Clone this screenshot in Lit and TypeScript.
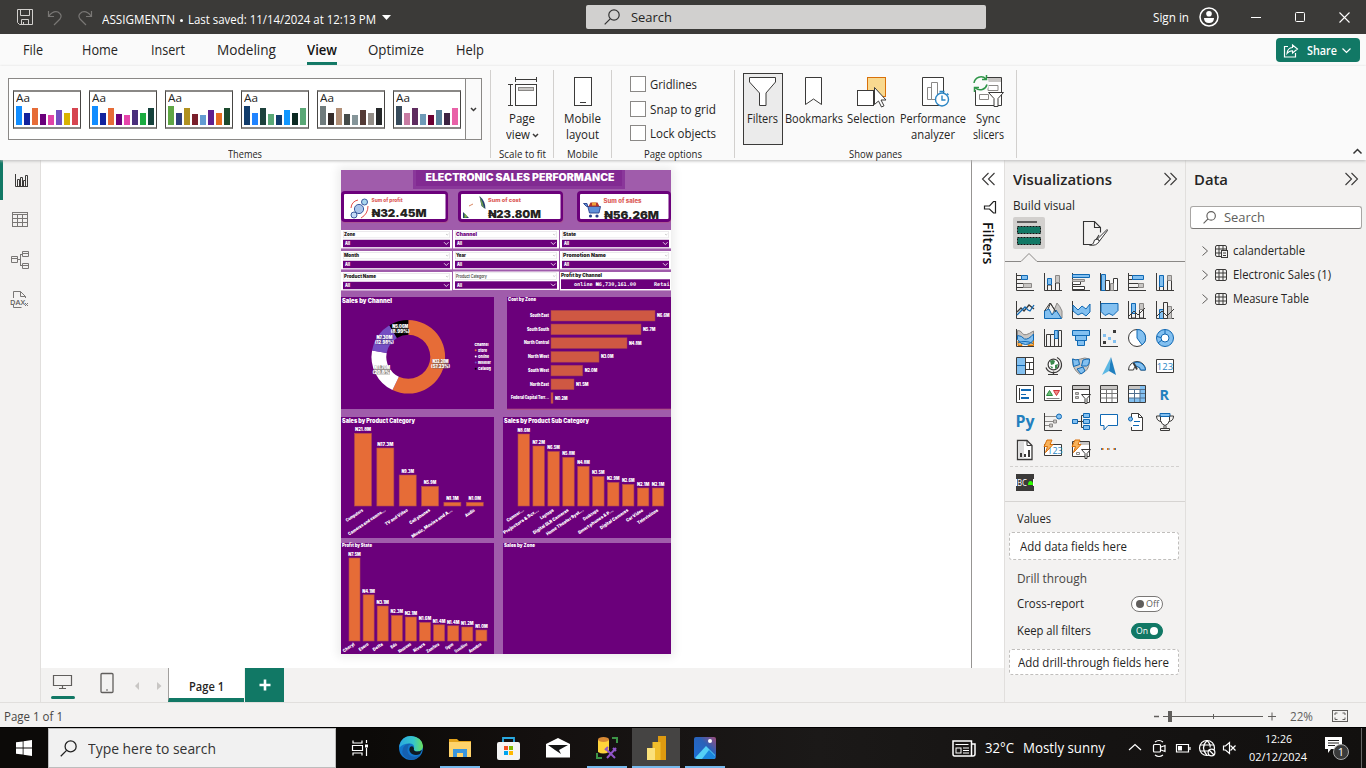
import { LitElement, html, svg, css } from "lit";
import { customElement, property } from "lit/decorators.js";

/** Single line of text that is condensed or stretched to a given width. */
@customElement("fit-text")
class FitText extends LitElement {
  @property({ type: Number }) w = 0;
  static styles = css`
    :host { display: inline-block; white-space: nowrap; text-align: left; flex: none; }
    span { display: inline-block; transform-origin: 0 50%; }
  `;
  render() { return html`<span><slot></slot></span>`; }
  updated() {
    const s = this.renderRoot.querySelector("span") as HTMLElement;
    s.style.transform = "none";
    const n = s.getBoundingClientRect().width;
    if (n && this.w) {
      this.style.width = this.w + "px";
      s.style.transform = `scaleX(${this.w / n})`;
    }
  }
}

const t = (s: string, w: number, cls = "") => html`<fit-text class=${cls} .w=${w}>${s}</fit-text>`;
const icon = (w: number, h: number, body: unknown, cls = "") =>
  html`<svg class="ic ${cls}" width=${w} height=${h} viewBox="0 0 ${w} ${h}" fill="none">${body}</svg>`;

/* ---------- report page ---------- */
@customElement("report-page")
class ReportPage extends LitElement {
  static styles = css`
    :host { display: block; width: 330px; height: 484px; box-shadow: 0 0 9px 3px #ececec; }
    svg { display: block; }
    text { font-family: Inter, "Open Sans", sans-serif; font-weight: 900; fill: #fff; }
    .dk { fill: #252423; }
    .pu { fill: #6b007b; }
    .rd { fill: #dc5b57; font-weight: 800; }
    .mono { font-family: "DejaVu Sans Mono", monospace; font-weight: 700; }
    .lt { font-weight: 600; fill: #444; }
  `;
  private tx(x: number, y: number, s: string, size: number, w = 0, cls = "", anchor = "start") {
    return w
      ? svg`<text x=${x} y=${y} font-size=${size} textLength=${w} lengthAdjust="spacingAndGlyphs" class=${cls} text-anchor=${anchor}>${s}</text>`
      : svg`<text x=${x} y=${y} font-size=${size} class=${cls} text-anchor=${anchor}>${s}</text>`;
  }
  private arc(a0: number, a1: number, fill: string) {
    const cx = 408.3, cy = 356.8, R = 36.8, r = 22;
    const p = (a: number, q: number) => {
      const k = ((a - 90) * Math.PI) / 180;
      return `${(cx + q * Math.cos(k)).toFixed(2)} ${(cy + q * Math.sin(k)).toFixed(2)}`;
    };
    const big = a1 - a0 > 180 ? 1 : 0;
    return svg`<path fill=${fill} d="M${p(a0, R)}A${R} ${R} 0 ${big} 1 ${p(a1, R)}L${p(a1, r)}A${r} ${r} 0 ${big} 0 ${p(a0, r)}Z"/>`;
  }
  private tag(x: number, y: number, a: string, b: string, fill: string) {
    return svg`<rect x=${x - 8} y=${y - 4.6} width="16" height="9.2" fill=${fill} opacity=".75"/>
      ${this.tx(x, y - 0.6, a, 4.3, 16, "", "middle")}${this.tx(x, y + 3.9, b, 4.3, 19, "", "middle")}`;
  }
  private card(x: number, x2: number) {
    return svg`<rect x=${x + 0.5} y="192" width=${x2 - x} height="31" rx="4" fill="#b2507f" opacity=".55"/>
      <rect x=${x} y="191" width=${x2 - x} height="31" rx="4" fill="#6b007b"/>
      <rect x=${x + 3} y="194" width=${x2 - x - 5.5} height="25" rx="1" fill="#fff"/>`;
  }
  private slicer(x: number, w: number, y: number, name: string, tw: number, big = false, cls = "dk") {
    return svg`<rect x=${x} y=${y} width=${w} height="18.4" fill="#fff"/>
      <rect x=${x + 2.5} y=${y + 1.3} width=${w - 5} height="6.6" fill="none" stroke="#d8d3d9" stroke-width=".5"/>
      ${this.tx(x + 3, y + (big ? 6.2 : 6), name, big ? 5.2 : 4.6, tw, cls)}
      <path d="M${x + w - 6} ${y + 4}l1.2 1 1.2-1" fill="none" stroke="#999" stroke-width=".5"/>
      <rect x=${x + 2} y=${y + 9.8} width=${w - 4} height="7.4" fill="#6b007b"/>
      ${this.tx(x + 4, y + 15.4, "All", 4.6, 5)}
      <path d="M${x + w - 8} ${y + 12.2}l2.3 2.3 2.3-2.3" fill="none" stroke="#fff" stroke-width=".8"/>`;
  }
  private cols(base: number, x: number, pitch: number, w: number, data: [number, string, string][], drop = 5, maxLen = 60) {
    return data.map(([top, v, n], i) => {
      const l = x + i * pitch, c = l + w / 2;
      return svg`<rect x=${l} y=${top} width=${w} height=${base - top} fill="#e66c37" stroke="#b14a4e" stroke-width=".6"/>
        ${this.tx(c, top - 2.2, "₦" + v + "M", 4.2, v.length > 3 ? 16 : 12.5, "", "middle")}
        <text transform="translate(${c + 0.5} ${base + drop}) rotate(-34)" font-size="4.500" text-anchor="end" textLength=${Math.min(maxLen, n.length * 2.2)} lengthAdjust="spacingAndGlyphs">${n}</text>`;
    });
  }
  render() {
    const zones: [string, number, number, string][] = [
      ["South East", 655, 19, "6.6"], ["South South", 641, 22, "5.7"], ["North Central", 627, 25, "4.8"],
      ["North West", 599, 21, "3.0"], ["South West", 582.7, 21, "2.0"], ["North East", 574, 19, "1.5"],
      ["Federal Capital Terr...", 553, 38, "0.2"],
    ];
    const P = "#6b007b";
    return html`<svg width="330" height="484" viewBox="341 170 330 484">
      ${svg`
      <rect x="341" y="170" width="330" height="484" fill="#a05cab"/>
      <rect x="413" y="170" width="212" height="19" fill="#8a379a"/><rect x="416" y="170" width="206" height="16" fill="#822a92"/>
      ${this.tx(425.5, 181, "ELECTRONIC SALES PERFORMANCE", 9.7, 189)}
      ${this.card(341, 448)}${this.card(458, 563)}${this.card(577, 671)}
      <g fill="none" stroke="#3a5a9e" stroke-width="1">
        <circle cx="359" cy="209" r="4.600" fill="#a9c4ea"/><circle cx="354" cy="215" r="3" fill="#c2d9f5"/><circle cx="364.500" cy="202" r="3" fill="#a9d6ee"/>
        <path d="M351 208a9 9 0 0 1 7-8M368 206q0 8-7 12" stroke="#e2504a"/></g>
      <path d="M479.500 196q6 5 6 13l-4-3z" fill="#25406f"/><path d="M479.500 196q3 5 5 13l-3-4z" fill="#6fa14e"/>
      <path d="M463 212l6 6h-6z" fill="#25406f"/><path d="M464.500 213l3 4-3 1z" fill="#7cb342"/><path d="M469 206l4-2" stroke="#d98863" stroke-width="1"/>
      <path d="M583.500 203.500h3.500l2.500 9.500h9.500l1.500-6.500h-14z" fill="#5f8fd8" stroke="#27408b" stroke-width=".9"/>
      <path d="M588.500 206.500l2-4h7l2 4z" fill="#b3342c"/><path d="M592 202.500h4v3h-4z" fill="#f0a23a"/><circle cx="590.500" cy="216" r="1.6" fill="#27408b"/><circle cx="597" cy="216" r="1.6" fill="#27408b"/>
      ${this.tx(371.5, 202, "Sum of profit", 5, 31, "rd")}${this.tx(371.5, 216.6, "₦32.45M", 10.6, 55, "dk")}
      ${this.tx(488, 202, "Sum of cost", 5.2, 33, "rd")}${this.tx(488, 218, "₦23.80M", 10.6, 53, "dk")}
      ${this.tx(603.5, 203, "Sum of sales", 5.6, 38, "rd")}${this.tx(604, 218.6, "₦56.26M", 10.6, 55, "dk")}
      ${this.slicer(341, 111, 230, "Zone", 11)}${this.slicer(453, 106, 230, "Channel", 21, true, "pu")}${this.slicer(560, 111, 230, "State", 13)}
      ${this.slicer(341, 111, 251, "Month", 15)}${this.slicer(453, 106, 251, "Year", 10)}${this.slicer(560, 111, 251, "Promotion Name", 43, true)}
      ${this.slicer(341, 111, 272, "Product Name", 32)}${this.slicer(453, 106, 271.5, "Product Category", 31, false, "lt")}
      <rect x="560" y="272" width="111" height="18.400" fill="#fff"/>${this.tx(561, 277.2, "Profit by Channel", 4.8, 41, "dk")}
      <rect x="561" y="279.300" width="109" height="9.700" fill=${P}/>
      ${this.tx(574, 286, "online ₦6,730,161.00", 5.2, 62, "mono")}${this.tx(654, 286, "Retai", 5.2, 15.5, "mono")}
      <rect x="341" y="297" width="153" height="112" fill=${P}/><rect x="507" y="297" width="164" height="112" fill=${P}/>
      <rect x="507" y="408.700" width="164" height="1" fill="#b3507f"/>
      <rect x="341" y="417" width="153" height="121" fill=${P}/><rect x="503" y="417" width="168" height="121" fill=${P}/>
      <rect x="341" y="543" width="153" height="111" fill=${P}/><rect x="503" y="543" width="168" height="111" fill=${P}/>
      ${this.tx(342, 303.2, "Sales by Channel", 5.5, 50)}
      ${this.arc(0, 205.5, "#e66c37")}${this.arc(205.5, 280, "#fff")}${this.arc(280, 329, "#744ec2")}${this.arc(329, 360, "#000")}
      ${this.tag(400.3, 328.6, "₦5.06M", "(8.99%)", "#333")}${this.tag(384.4, 340, "₦7.30M", "(12.98%)", "#553c90")}
      ${this.tag(382, 369.8, "₦11.70M", "(20.8%)", "#77716a")}${this.tag(440.6, 364, "₦32.20M", "(57.23%)", "#8b6552")}
      ${this.tx(474.5, 346, "Channel", 4.1, 14)}
      ${["Store", "Online", "Reseller", "Catalog"].map((n, i) => svg`
        <circle cx="475.700" cy=${350.2 + i * 6.2} r="1" fill=${["#e66c37", "#fff", "#744ec2", "#000"][i]}/>
        ${this.tx(478, 351.7 + i * 6.2, n, 4.1, [9, 11, 13, 13][i])}`)}
      ${this.tx(508, 301, "Cost by Zone", 4.9, 28)}
      ${zones.map(([n, e, w, v], i) => svg`
        <rect x="551" y=${310.3 + i * 13.73} width=${e - 551} height="10.700" fill="#cf5843" stroke="#a03c53" stroke-width=".5"/>
        ${this.tx(549, 317 + i * 13.73, n, 4.4, w, "", "end")}
        ${this.tx(e + 2, 317.2 + i * 13.73, "₦" + v + "M", 4.3, 12.5)}`)}
      ${this.tx(342, 423.2, "Sales by Product Category", 5.5, 73)}
      ${this.cols(506, 354.5, 22.35, 17, [[433.3, "21.8", "Computers"], [448, "17.3", "Cameras and camco..."], [475, "9.3", "TV and Video"], [486.3, "5.9", "Cell phones"], [502.3, "1.1", "Music, Movies and A..."], [502.3, "1.0", "Audio"]])}
      ${this.tx(504, 423.2, "Sales by Product Sub Category", 5.5, 85)}
      ${this.cols(506, 518, 14.93, 11.4, [[434, "8.6", "Camcor..."], [446, "7.2", "Projectors & Scr..."], [451.5, "6.5", "Laptops"], [457.3, "5.8", "Digital SLR Cameras"], [466.3, "4.8", "Home Theater Syst..."], [476.5, "3.5", "Desktops"], [482.4, "2.9", "Smart phones & P..."], [484.4, "2.6", "Digital Cameras"], [488, "2.1", "Car Video"], [488, "2.1", "Televisions"]])}
      ${this.tx(342, 547, "Profit by State", 4.9, 30)}
      ${this.cols(641, 349, 14.1, 11, [[558, "7.5", "Cheryl"], [594.8, "4.1", "Esero"], [606, "3.1", "Delta"], [615.4, "2.3", "Edo"], [617, "2.1", "Nasarawa"], [622.4, "1.6", "Rivers"], [624.8, "1.4", "Zamfara"], [625.8, "1.4", "Ogun"], [627, "1.2", "Cross River"], [630, "1.0", "Anambra"]], 4, 14.5)}
      ${this.tx(504, 547.2, "Sales by Zone", 4.8, 31)}
      `}
    </svg>`;
  }
}

/* ---------- icon drawings ---------- */
const K = "#3b3a39", B = "#1069b4", LB = "#83c0f0", G = "#8a8886", LG = "#c8c6c4";
const axes = svg`<path d="M.5 0v17.500H18" stroke=${K}/>`;
const vizIcons = [
  svg`${axes}<path d="M.5 2.500h5v4h-5M.5 10.500h7v4h-7" stroke=${K}/><path d="M5.500 2.500h6v4h-6z" fill=${LB} stroke=${B}/><path d="M7.500 10.500h8v4h-8z" fill=${LG} stroke=${G}/>`,
  svg`${axes}<path d="M3.500 17v-5h4v5M11.500 17v-7h4v7" stroke=${K}/><path d="M3.500 5.500h4v6h-4z" fill=${LB} stroke=${B}/><path d="M11.500 2.500h4v7h-4z" fill=${LG} stroke=${G}/>`,
  svg`${axes}<path d="M.5 1.500h17v3H.5z" fill=${LB} stroke=${B}/><path d="M.5 8.500h8v3h-8zM.5 13.500h12v3H.5z" fill="#fff" stroke=${K}/><path d="M.5 6.500h12v2H.5z" fill=${LG} stroke=${G}/>`,
  svg`${axes}<path d="M1.500 1.500h4v16h-4z" fill=${LB} stroke=${B}/><path d="M5.500 7.500h4v10h-4zM13.500 5.500h4v12h-4z" fill="#fff" stroke=${K}/><path d="M10.500 10.500h3v7h-3z" fill=${LG} stroke=${G}/>`,
  svg`${axes}<path d="M.5 2.500h4v4h-4M.5 10.500h10v4H.5" stroke=${K}/><path d="M4.500 2.500h11v4h-11z" fill=${LB} stroke=${B}/><path d="M10.500 10.500h5v4h-5z" fill=${LG} stroke=${G}/>`,
  svg`${axes}<path d="M3.500 17v-4h4v4M11.500 17V7h4v10" stroke=${K}/><path d="M3.500 2.500h4v11h-4z" fill=${LB} stroke=${B}/><path d="M11.500 2.500h4v5h-4z" fill=${LG} stroke=${G}/>`,
  svg`${axes}<path d="M1 11l4-4 3 3 5-6 5 4" stroke=${K} stroke-width="1.300"/><path d="M1 14l4-4 4-4 3 3 2 1 4-6" stroke=${B} stroke-width="1.300"/>`,
  svg`<path d="M7 17l6-15q3 3 5 8v7z" fill=${LG} stroke=${G}/><path d="M.5 10v7l6-15 6 10" stroke=${K}/><path d="M.5 10v7.500h17L12 9l-4 5-3-6z" fill=${LB} stroke=${B}/><path d="M.500 10L6 2l6 9" stroke=${K}/>`,
  svg`${axes}<path d="M1 4l5 5 4-4 4 3 4-5v8l-4 4-4-3-4 2-5-4z" fill=${LB} stroke=${B}/>`,
  svg`${axes}<path d="M1 2.500h17v7l-5 5-4-2-4 2-4-4z" fill=${LB} stroke=${B}/>`,
  svg`${axes}<path d="M3.500 2.500h4v10h-4z" fill=${LB} stroke=${B}/><path d="M11.500 2.500h4v6h-4z" fill=${LG} stroke=${G}/><path d="M3.500 13v4h4v-5M11.500 9v8h4V8M1 15l5-5 4 4 7-7" stroke=${K}/>`,
  svg`${axes}<path d="M3.500 8.500h4v9h-4z" fill=${LB} stroke=${B}/><path d="M11.500 5.500h4v12h-4z" fill=${LG} stroke=${G}/><path d="M7.500 1.500h4v16h-4zM1 15l5-5 5 5 7-7" stroke=${K}/>`,
  svg`${axes}<path d="M1.500 1.500q3-.5 5 3t11-2.500v5q-6 5-10 4-3-.5-6-4z" fill=${LG} stroke=${G}/><path d="M2 12h3l1 4.500H2zM12 10.500h5.500v6H12z" fill="#f5b35c" stroke="#d97706"/><path d="M1.500 6.500q4 0 7 3.500 4 1 9-5v6q-3 5-8 4.500-5 0-8-5z" fill=${LB} stroke=${B}/><path d="M2 13.500q3-1 7-1t8 2" stroke=${B}/>`,
  svg`${axes}<path d="M2.500 17V5.500h4V17M6.500 5.500h4V17M14.500 17V1.500h3V17" stroke=${K}/><path d="M10.500 1.500h3.500v8h-3.500z" fill=${LB} stroke=${B}/>`,
  svg`<path d="M.5 1.500h17v5H.5zM3.500 6.500h11v5h-11zM5.500 11.500h7v5h-7z" fill=${LB} stroke=${B}/>`,
  svg`${axes}<path d="M13 1h3v3h-3zM3 12h3v3H3z" fill=${K}/><path d="M3 5h3v3H3zM8 8h3v3H8zM13 11h3v3h-3z" fill=${LB}/>`,
  svg`<circle cx="9" cy="9" r="8.500" fill="#fff" stroke=${K}/><path d="M9 .5a8.500 8.500 0 0 1 5 15.400L9 9z" fill=${LB} stroke=${B}/>`,
  svg`<circle cx="9" cy="9" r="6.300" stroke=${LB} stroke-width="4.400"/><circle cx="9" cy="9" r="8.500" stroke=${B}/><circle cx="9" cy="9" r="4" fill="#fff" stroke=${B}/><path d="M9 .5V5M.8 7.500L5 8.500M2 14l4-3" stroke=${B}/>`,
  svg`<path d="M.5.500h17v17H.5z" fill="#fff" stroke=${K}/><path d="M1 1h8v16H1z" fill=${LB}/><path d="M1 8.500h8" stroke=${B}/><path d="M9.500 1v16M9 5.500h8M9 12.500h8M13.500 6v6" stroke=${K}/>`,
  svg`<circle cx="9.500" cy="7.500" r="5.400" fill="#fff" stroke=${K} stroke-width="1.200"/><path d="M6 4q3-2 5 0l-1 3-3 1zM11 8l3-1-1 4-2 1zM6 9l3 1-1 2z" fill="#3a8a4c"/><path d="M13 .5a8 8 0 1 1-11 10M9.500 14.500v3M4 17.500h10" stroke=${K} stroke-width="1.200"/>`,
  svg`<path d="M.5 2q4 2 8 0t9 0q0 9-4 12t-6 3Q0 12 .5 2z" fill=${LG} stroke=${G}/><path d="M.5 2q3 1.500 6 .500l1 5-6 2zM11 3q3-1 6.500-1 0 6-3 7h-5zM5 12l6-2 2 4-4 3z" fill=${LB} stroke=${B}/>`,
  svg`<path d="M11 0L2 18l7-4z" fill="#5cb8e4"/><path d="M11 0l5 18-7-4z" fill="#1f7fbf"/>`,
  svg`<path d="M.5 13a8.500 8.500 0 0 1 17 0h-5a3.500 3.500 0 0 0-7 0z" fill="#fff" stroke=${K}/><path d="M5 6.200a8.500 8.500 0 0 1 12.500 6.800h-5q0-3-3.500-3.500z" fill=${LB} stroke=${B}/><path d="M5.500 6l3.500 6.500" stroke=${K} stroke-width="1.800"/>`,
  svg`<path d="M.5 2.500h17v13H.5z" fill="#fff" stroke=${K}/><text x="9" y="12.500" font-size="9.500" text-anchor="middle" fill="#2b86c5" font-family="Open Sans">123</text>`,
  svg`<path d="M.5.500h17v17H.5z" fill="#fff" stroke=${K}/><path d="M3.500 3v12" stroke=${K}/><path d="M5 5h10M5 13h8" stroke=${B} stroke-width="2"/><path d="M5 9.500h5" stroke=${B}/>`,
  svg`<path d="M.5 1.500h17v14H.5z" fill="#fff" stroke=${K}/><path d="M2.500 10.500l3-5 3 5z" fill="#6abf78" stroke="#2d8a3e"/><path d="M9.500 5.500h6l-3 5z" fill="#f08a8a" stroke="#d13438"/><path d="M2.500 13.500h13" stroke=${G}/>`,
  svg`<path d="M.5.500h17v17H.5z" fill="#fff" stroke=${K}/><path d="M1 1h16v3H1z" fill=${LG}/><path d="M.5 4.500h17" stroke=${K}/><path d="M3.500 7.500h3v2h-3zM3.500 11.500h3v2h-3z" fill=${LG} stroke=${G}/><path d="M9.500 9.500h9l-3.500 4v5h-2v-5z" fill="#fff" stroke=${K}/>`,
  svg`<path d="M.5.500h17v17H.5z" fill="#fff" stroke=${K}/><path d="M1 1h16v3H1z" fill=${LG}/><path d="M.5 4.500h17M.5 8.500h17M.5 13h17M6.500 4v13M12 4v13" stroke="#777"/>`,
  svg`<path d="M.5.500h17v17H.5z" fill="#fff"/><path d="M12 1h5v16H1v-4h11z" fill=${LB}/><path d="M1 1h11v3H1z" fill=${LG}/><path d="M.5 4.500h17M.5 8.500h17M.5 13h17M6.500 4v13M12 4v13" stroke="#4f6f8f"/><path d="M.5.500h17v17H.5z" stroke=${K}/>`,
  svg`<text x="3.500" y="14.500" font-size="15" font-weight="700" fill="#2380be" font-family="Open Sans" textLength="9.500" lengthAdjust="spacingAndGlyphs">R</text>`,
  svg`<text x="-.5" y="14" font-size="16" font-weight="700" fill="#2380be" font-family="Open Sans" textLength="19" lengthAdjust="spacingAndGlyphs">Py</text>`,
  svg`${axes}<path d="M1 3.500h12M1 8.500h8M1 12.500h5" stroke=${G}/><circle cx="15" cy="3.500" r="2.500" fill=${LB} stroke=${B}/><path d="M9.500 7h3v3h-3zM5.500 11h3v3h-3z" fill=${LG} stroke=${G}/>`,
  svg`<path d="M6 8.500h6M9.500 2.500v12M9.500 2.500h3M9.500 14.500h3" stroke=${K}/><path d="M.5 6.500h5v4h-5zM11.500.500h6v4h-6zM11.500 6.500h6v4h-6zM11.500 12.500h6v4h-6z" fill=${LB} stroke=${B}/>`,
  svg`<path d="M.5 1.500h17v11H8l-4 4.500v-4.500H.5z" fill="#fff" stroke=${B}/>`,
  svg`<path d="M3.500 8V.500h7l4 4v13h-11V14" fill="#fff" stroke=${K}/><path d="M10.500.500v4h4" stroke=${K}/><circle cx="2.500" cy="6" r="2" fill=${LB} stroke=${B}/><path d="M6 8.500h6M5 12.500h6" stroke=${B}/>`,
  svg`<path d="M4.500.500h9v7q-1 4-4.500 5-3.500-1-4.500-5z" fill="#fff" stroke=${K}/><path d="M4 .5h10v3H4z" fill=${LB} stroke=${B}/><path d="M4.500 3h-4q0 5 4.500 5.500M13.500 3h4q0 5-4.500 5.500M8 12.500v3h2v-3M4.500 17.500h9v-2h-9z" stroke=${K}/>`,
  svg`<path d="M1.500-.5h9.500l5 5v14H1.500z" fill="#fff" stroke=${K} stroke-width="1.300"/><path d="M2.500.500H8v17H2.500z" fill="#ddd"/><path d="M11-.5v5h5" stroke=${K}/><path d="M4 12h2v4H4zM8 13h2v3H8zM12 9h2v7h-2z" fill=${K}/>`,
  svg`<path d="M.5 3.500h17v11H.5z" fill="#fff" stroke=${K}/><text x="11" y="12.500" font-size="9" text-anchor="middle" fill="#2b86c5" font-family="Open Sans">123</text><path d="M3-1h5L6 3.500h3l-7.500 8 2-6H0z" fill="#f8b25a" stroke="#d9700a"/>`,
  svg`<path d="M.5.500h17v15H.5z" fill="#fff" stroke=${K}/><path d="M8 1h9v3H8z" fill=${LG}/><path d="M4.500 11.500h3v2h-3z" stroke=${G}/><path d="M9.500 8.500h9l-3.500 4v5h-2v-5z" fill="#fff" stroke=${K}/><path d="M3-1h5L6 3.500h3l-7.500 8 2-6H0z" fill="#f8b25a" stroke="#d9700a"/>`,
  svg`<path d="M1 7h1v2H1zM9.500 7h-1v2h1zM15 7h1v2h-1z" fill="#3571b8"/><path d="M2 7h1.500v2H2zM7 7h1.500v2H7zM13.500 7H15v2h-1.500z" fill="#d9700a"/>`,
];

const themes = [
  "#118dff #12239e #e66c37 #6b007b #e044a7 #744ec2 #d9b300 #d64550",
  "#118dff #12239e #e66c37 #6b007b #e645ab #4a2f7c #1aab40 #15423c",
  "#5fa644 #2f3f7c #b09120 #7a1f2b #629bd2 #5f1f8f #e66c1f #1c4a2e",
  "#113c6b #2184ff #1d413c #5aa876 #113c6b #1197ff #0c2a22 #5aa876",
  "#6f7b7c #352c2a #b18f77 #454b49 #859599 #543a35 #938d87 #26282a",
  "#374b5c #c77ba2 #5f2c5f #6f9bb8 #6b0032 #58819b #3e2342 #e962a8",
].map((s) => s.split(" "));
const th = [19, 12, 17, 11, 10, 15, 12, 17];

const check = (label: string, w: number) => html`<div class="chk"><i></i>${t(label, w)}</div>`;
const rbtn = (cls: string, ic: unknown, a: [string, number], b?: [string, number], caret = false) => html`
  <div class="rbtn ${cls}">${ic}<div class="l1">${t(a[0], a[1])}</div>
    <div class="l2">${b ? t(b[0], b[1]) : ""}${caret ? icon(7, 5, svg`<path d="M1 1l2.500 2.500L6 1" stroke=${K} stroke-width="1.500"/>`) : ""}</div></div>`;
const dbl = (left: boolean) => icon(13, 14, left
  ? svg`<path d="M6.500 1l-6 6 6 6M12.500 1l-6 6 6 6" stroke=${K} stroke-width="1.100"/>`
  : svg`<path d="M.5 1l6 6-6 6M6.500 1l6 6-6 6" stroke=${K} stroke-width="1.100"/>`);
const glass = (c: string, s = 16, sw = 1.2) => html`<svg class="ic" width=${s} height=${s} viewBox="0 0 16 16" fill="none">
  <circle cx="10" cy="6" r="5.200" stroke=${c} stroke-width=${sw}/><path d="M6.200 9.800L.7 15.300" stroke=${c} stroke-width=${sw}/></svg>`;

@customElement("app-root")
class AppRoot extends LitElement {
  static styles = css`
    :host { display: flex; flex-direction: column; width: 1366px; height: 768px; overflow: hidden; font: 12px/16px "Open Sans", "Noto Sans", sans-serif; color: #252423; background: #fff; }
    * { box-sizing: border-box; }
    .ic { display: block; flex: none; overflow: visible; }
    .title { height: 34px; flex: none; background: #3b3a38; color: #fff; display: flex; align-items: center; padding-left: 17px; font-size: 12px; }
    .title .undo { margin-left: 15px; } .title .redo { margin-left: 16px; }
    .title .file { margin: 6px 0 0 10px; display: flex; align-items: center; }
    .title .dot { width: 3px; height: 3px; border-radius: 50%; background: #fff; margin: 0 5px 0 5px; }
    .title .car { margin: -5px 0 0 6px; }
    .tsearch { width: 400px; height: 24px; margin-left: 195px; background: #d1d0cf; border-radius: 2px; color: #252423; display: flex; align-items: center; padding-left: 18px; gap: 11px; font-size: 13px; }
    .sign { margin-left: 167px; margin-right: 10px; margin-top: 2px; }
    .winbtns { display: flex; gap: 34px; margin-left: 32px; align-items: center; }
    .menu { height: 32px; flex: none; background: #fafafa; display: flex; align-items: flex-start; padding-left: 23px; font-size: 14px; line-height: 20px; }
    .menu .m { height: 31px; padding-top: 6px; }
    .menu .g1 { margin-right: 39px; } .menu .g2 { margin-right: 33px; } .menu .g3 { margin-right: 32px; } .menu .g4 { margin-right: 31px; }
    .menu .on { border-bottom: 3px solid #117865; font-weight: 600; color: #111; }
    .share { margin-left: auto; margin-right: 6px; margin-top: 4px; width: 84px; height: 24px; border-radius: 4px; background: #117865; color: #fff; display: flex; align-items: center; padding: 1px 0 0 7px; gap: 5px; font-size: 12px; font-weight: 600; }
    .share .txt { margin-left: 4px; }
    .ribbon { height: 94px; flex: none; background: #fafafa; display: flex; padding: 4px 0 0; box-shadow: 0 1px 3px #bbb; position: relative; z-index: 2; }
    .grp { display: flex; flex-direction: column; height: 88px; border-right: 1px solid #d2d0ce; }
    .grp .c { height: 77px; display: flex; flex: none; }
    .grp .lab { font-size: 10px; line-height: 14px; display: flex; justify-content: center; }
    .g-th { width: 491px; } .g-sc { width: 63px; } .g-mo { width: 58px; } .g-po { width: 123px; } .g-sp { width: 282px; }
    .gal { width: 474px; height: 62px; margin: 8px 0 0 8px; border: 1px solid #8a8886; background: #fff; display: flex; align-items: center; padding-left: 4px; }
    .th { flex: none; width: 68px; height: 39px; margin-right: 8px; border: 1px solid #484644; border-top: 2px solid #8a8886; border-bottom: 2px solid #8a8886; padding: 0 0 2px 2px; display: flex; flex-direction: column; justify-content: space-between; font-size: 11px; line-height: 12px; background: #fff; }
    .bars { display: flex; gap: 2px; align-items: flex-end; height: 19px; }
    .bars i { width: 6px; flex: none; }
    .gal .dd { flex: none; margin-left: -4px; width: 16px; height: 60px; border-left: 1px solid #8a8886; background: #fafafa; display: flex; align-items: center; justify-content: center; }
    .rbtn { display: flex; flex-direction: column; align-items: center; height: 72px; margin-top: 3px; padding-top: 3px; border: 1px solid transparent; flex: none; }
    .l1 { margin-top: 5px; height: 16px; line-height: 16px; } .l2 { display: flex; align-items: center; gap: 2px; height: 16px; }
    .b1 { width: 62px; } .b2 { width: 57px; } .bf { width: 40px; border-color: #3b3a39; background: #ebebeb; padding-right: 1px; }
    .bb { width: 62px; } .bb > .ic { margin-left: -1px; } .bs { width: 52px; } .bp { width: 72px; } .by { width: 38px; }
    .g-sp .c { padding-left: 8px; }
    .g-po .c { flex-direction: column; padding: 6px 0 0 18px; gap: 8.500px; }
    .chk { display: flex; align-items: center; gap: 4px; height: 16px; }
    .chk i { width: 16px; height: 16px; border: 1px solid #8a8886; background: #fff; }
    .chk fit-text { padding-top: 2px; }
    .collapse { margin-left: auto; padding: 79px 4px 0 0; }
    .main { height: 543px; flex: none; display: flex; background: #fff; }
    .rail { width: 41px; background: #f3f2f1; border-right: 1px solid #e1dfdd; display: flex; flex-direction: column; border-bottom: 1px solid #e1dfdd; }
    .rail div { height: 40px; display: flex; align-items: center; justify-content: center; }
    .rail .sel { border-left: 3px solid #117865; padding-right: 1px; }
    .work { width: 963px; display: flex; flex-direction: column; }
    .upper { height: 508px; display: flex; }
    .canvas { width: 930px; padding: 10px 0 0 300px; }
    .filters { width: 33px; border-left: 1px solid #979593; display: flex; flex-direction: column; align-items: center; padding-top: 12px; }
    .vert { writing-mode: vertical-rl; font-size: 14px; font-weight: 600; line-height: 20px; margin-top: 8px; letter-spacing: .1px; color: #111; }
    .filters .fl { margin: 15px 0 0 3px; }
    .tabs { height: 35px; background: #f3f2f1; display: flex; border-bottom: 1px solid #e1dfdd; }
    .mon { margin: 7px 0 0 10px; display: flex; flex-direction: column; align-items: center; gap: 7px; width: 24px; }
    .mon .ic { margin-left: -1px; }
    .mon b { width: 24px; height: 3px; border-radius: 2px; background: #117865; }
    .pg { width: 76px; margin-left: 7px; background: #fff; border-left: 1px solid #a19f9d; border-bottom: 4px solid #117865; display: flex; justify-content: center; padding-top: 11px; font-weight: 600; }
    .add { width: 39px; background: #117865; margin-left: 1px; display: flex; align-items: center; justify-content: center; }
    .viz { width: 182px; background: #f3f2f1; border-left: 1px solid #e1dfdd; border-right: 1px solid #e1dfdd; border-bottom: 1px solid #e1dfdd; }
    .phead { display: flex; justify-content: space-between; align-items: center; height: 20px; font-size: 15px; font-weight: 600; line-height: 20px; }
    .viz .phead { margin: 9px 8px 0 8px; }
    .bv { margin: 9px 0 0 8px; font-size: 12px; height: 16px; }
    .modes { display: flex; margin: 3px 0 0 8px; }
    .modes .a { width: 32px; height: 32px; background: #d2d0ce; border-radius: 2px; display: flex; align-items: center; justify-content: center; }
    .modes .b { margin: 4px 0 0 38px; }
    .notch { display: block; margin-top: 4px; }
    .vgrid { display: grid; grid-template-columns: repeat(6, 18px); gap: 10px; margin: 11px 0 0 11px; }
    .dash { margin: 7px 6px 0 5px; border-top: 1px dashed #d2d0ce; height: 8px; }
    .bc { width: 18px; height: 17px; margin-left: 11px; background: #3b3a39; overflow: hidden; display: flex; align-items: center; }
    .sec { border-top: 1px solid #d6d4d2; margin-top: 10px; padding-top: 9px; }
    .sec .h { margin-left: 12px; height: 16px; }
    .well { margin: 5px 6px 0 4px; height: 28px; border: 1px dashed #c0bebc; border-radius: 3px; background: #fff; display: flex; align-items: center; padding: 2px 0 0 10px; }
    .well.w2 { height: 26px; padding-left: 8px; margin-top: 10px; }
    .row { display: flex; justify-content: space-between; align-items: center; margin: 0 22px 0 12px; height: 16px; }
    .row.r1 { margin-top: 9px; } .row.r2 { margin-top: 11px; }
    .sec .drill { color: #484644; font-weight: 500; margin-top: 11px; }
    .tg { width: 32px; height: 16px; border-radius: 8px; border: 1px solid #797775; display: flex; align-items: center; font-size: 9.500px; background: #fff; color: #605e5c; padding-left: 4px; gap: 2px; }
    .tg i { width: 8px; height: 8px; border-radius: 50%; background: #605e5c; }
    .tg.on { background: #117865; border-color: #117865; color: #fff; } .tg.on i { background: #fff; }
    .data { width: 180px; background: #f3f2f1; border-bottom: 1px solid #e1dfdd; }
    .data .phead { margin: 9px 8px 0 8px; }
    .ds { margin: 17px 0 0 4px; width: 172px; height: 23px; background: #fff; border: 1px solid #a8a6a4; border-radius: 3px; display: flex; align-items: center; padding-left: 12px; gap: 8px; font-size: 12px; color: #605e5c; border-bottom-color: #797775; }
    .tree { margin: 10px 0 0 14px; }
    .tr { display: flex; align-items: center; height: 24px; }
    .tr .tb { margin: 0 6px 0 6px; }
    .status { height: 24px; flex: none; background: #f3f2f1; display: flex; align-items: center; padding: 4px 0 0 4px; color: #484644; }
    .zoom { margin: -2px 17px 0 auto; display: flex; align-items: center; }
    .zoom .pc { margin: 1px 19px 0 13px; color: #605e5c; }
    .task { height: 41px; flex: none; background: linear-gradient(90deg, #0c0a08 0 27%, #14100f 40%, #1b1918 60%, #161413 75%, #12100f 100%); color: #fff; display: flex; align-items: center; border-top: 1px solid #000; }
    .start { width: 48px; display: flex; justify-content: center; }
    .tbs { width: 288px; height: 40px; background: #f1f1f1; border: 1px solid #bdbdbd; color: #333; display: flex; align-items: center; padding-left: 11px; gap: 11px; font-size: 15px; }
    .app { height: 40px; display: flex; align-items: center; justify-content: center; border-bottom: 2px solid transparent; padding-top: 2px; }
    .run { border-bottom-color: #76b9ed; }
    .a0 { width: 48px; } .a1 { width: 40px; } .a2 { width: 48px; background: #454443; }
    .m3 { margin-left: 3px; padding-right: 1px; } .m5 { margin-left: 5px; } .m9 { margin-left: 9px; }
    .mk { width: 49px; padding-right: 3px; }
    .tray { margin-left: auto; display: flex; align-items: center; font-size: 14px; }
    .clock { width: 58px; display: flex; flex-direction: column; align-items: center; font-size: 11.500px; line-height: 18px; margin: 0 18px 0 12px; }
    .peek { width: 1px; height: 40px; background: #666; margin: 0 4px 0 13px; }
  `;
  private menu(s: string, w: number, cls: string) { return html`<div class="m ${cls}">${t(s, w)}</div>`; }

  private titleBar() {
    return html`<div class="title">
      ${icon(16, 16, svg`<path d="M.5.500h15v15h-13l-2-2zM3.500.500v6h9v-6M4.500 15.500v-5h7v5M6.500 13v2.500" stroke="#d2d0ce"/>`)}
      ${icon(14, 15, svg`<path d="M.5 1v5.500H6M1 6q4-5.500 9-4 5 3 2 7l-6 6" stroke="#797775" stroke-width="1.200"/>`, "undo")}
      ${icon(14, 15, svg`<path d="M13.500 1v5.500H8M13 6Q9 .5 4 2q-5 3-2 7l6 6" stroke="#797775" stroke-width="1.200"/>`, "redo")}
      <div class="file">${t("ASSIGMENTN", 73)}<i class="dot"></i>${t("Last saved: 11/14/2024 at 12:13 PM", 188)}
        ${icon(9, 5, svg`<path d="M0 0h9L4.500 5z" fill="#fff"/>`, "car")}</div>
      <div class="tsearch">${glass("#333")}${t("Search", 41)}</div>
      <div class="sign">${t("Sign in", 36)}</div>
      ${icon(20, 20, svg`<circle cx="10" cy="10" r="9" stroke="#fff" stroke-width="1.500"/><circle cx="10" cy="6.800" r="2.800" fill="#fff"/><path d="M5 11h10q0 5-5 5t-5-5z" fill="#fff"/>`)}
      <div class="winbtns">
        ${icon(10, 10, svg`<path d="M0 5.500h10" stroke="#fff"/>`)}
        ${icon(11, 11, svg`<rect x=".5" y=".5" width="9" height="9" rx="1" stroke="#fff"/>`)}
        ${icon(11, 11, svg`<path d="M-.5.500l10 10m0-10l-10 10" stroke="#fff" stroke-width="1.100"/>`)}
      </div></div>
    <div class="menu">
      ${this.menu("File", 20, "g1")}${this.menu("Home", 36, "g2")}${this.menu("Insert", 34, "g3")}${this.menu("Modeling", 59, "g4")}
      ${this.menu("View", 30, "on g4")}${this.menu("Optimize", 56, "g3")}${this.menu("Help", 28, "")}
      <div class="share">${icon(15, 14, svg`<path d="M5 2.500H1.500v10.500h11V9" stroke="#fff" stroke-width="1.200"/><path d="M9.500 1l5 4-5 4V6.700Q6 6.700 4 9.500 4.500 4 9.500 3.500z" stroke="#fff" stroke-width="1.100"/>`)}
        <div class="txt">${t("Share", 30)}</div>${icon(9, 6, svg`<path d="M.5.500l4 4 4-4" stroke="#fff" stroke-width="1.200"/>`)}</div>
    </div>`;
  }

  private ribbon() {
    return html`<div class="ribbon">
      <div class="grp g-th"><div class="c"><div class="gal">
        ${themes.map((c) => html`<div class="th">${t("Aa", 14)}<div class="bars">${c.map((x, i) => html`<i style="height:${th[i]}px;background:${x}"></i>`)}</div></div>`)}
        <div class="dd">${icon(7, 5, svg`<path d="M1 1l2.500 2.500L6 1" stroke=${K} stroke-width="1.500"/>`)}</div></div></div>
        <div class="lab">${t("Themes", 34)}</div></div>
      <div class="grp g-sc"><div class="c">${rbtn("b1", icon(29, 29, svg`
          <path d="M7.500 0v5M28.500 0v5M7 2.500h22M0 7.500h5M0 28.500h5M2.500 7v22" stroke=${K}/><rect x="7.500" y="7.500" width="21" height="21" fill="#fff" stroke=${K}/><rect x="10.500" y="10.500" width="15" height="3" fill="#c8c6c4" stroke="#8a8886"/>`), ["Page", 26], ["view", 24], true)}</div>
        <div class="lab">${t("Scale to fit", 47)}</div></div>
      <div class="grp g-mo"><div class="c">${rbtn("b2", icon(18, 29, svg`<rect x=".5" y=".5" width="17" height="28" fill="#fff" stroke=${K}/><path d="M6 25.500h6" stroke=${K}/>`), ["Mobile", 37], ["layout", 33])}</div>
        <div class="lab">${t("Mobile", 31)}</div></div>
      <div class="grp g-po"><div class="c">${check("Gridlines", 47)}${check("Snap to grid", 66)}${check("Lock objects", 66)}</div>
        <div class="lab">${t("Page options", 58)}</div></div>
      <div class="grp g-sp"><div class="c">
        ${rbtn("bf", icon(27, 29, svg`<path d="M.5.500h26V5L17 16v12.500h-6.500V16L.5 5z" fill="#fff" stroke=${K}/>`), ["Filters", 31])}
        ${rbtn("bb", icon(17, 29, svg`<path d="M.5.500h16v27L8.500 22 .5 27.500z" fill="#fff" stroke=${K}/>`), ["Bookmarks", 58])}
        ${rbtn("bs", icon(29, 29, svg`<rect x="10.500" y=".5" width="18" height="19" fill="#f8d98f" stroke="#d9700a"/><rect x=".5" y="13.500" width="16" height="15" fill="#fff" stroke=${K}/>
          <path d="M17.500 10.500v17l4-3.500 3 6 2.500-1.200-3-5.800h5z" fill="#fff" stroke=${K}/>`), ["Selection", 48])}
        ${rbtn("bp", icon(29, 29, svg`<path d="M3.500.500h21v28h-21z" fill="#fff" stroke=${K}/><path d="M8.500 22.500v-12h4v12zM12.500 22.500v-17h6v17z" stroke="#8a8886"/>
          <circle cx="23" cy="22.500" r="6.500" fill="#fff" stroke="#2b86c5" stroke-width="1.400"/><path d="M20.500 14.500h5M23 18.500v4.500h3.500M28 16.500l1.500 1.500" stroke="#2b86c5" stroke-width="1.400"/>`), ["Performance", 66], ["analyzer", 44])}
        ${rbtn("by", icon(31, 29, svg`<path d="M10.500.500h18v28h-26V13" stroke=${K} fill="#fff"/><path d="M15 1h13v4H15z" fill="#c8c6c4"/><path d="M15 8.500h10v5H15zM6.500 17.500h9v5h-9z" stroke="#8a8886"/>
          <circle cx="7.500" cy="6.500" r="8.500" fill="#fafafa"/><path d="M1 6a7 7 0 0 1 12-4M14 7.500A7 7 0 0 1 2.500 11M13.500-2v4.500H9M1.500 15v-4.500H6" stroke="#2e9548" stroke-width="1.500"/>
          <path d="M15.500 15.500h15l-5.500 6v8h-4v-8z" fill="#fff" stroke=${K}/>`), ["Sync", 24], ["slicers", 31])}
        </div><div class="lab">${t("Show panes", 53)}</div></div>
      <div class="collapse">${icon(9, 6, svg`<path d="M.5 4.500l4-4 4 4" stroke="#333" stroke-width="1.500"/>`)}</div>
    </div>`;
  }

  private viz() {
    return html`<div class="viz">
      <div class="phead">${t("Visualizations", 99)}${dbl(false)}</div>
      <div class="bv">${t("Build visual", 62)}</div>
      <div class="modes"><div class="a">${icon(24, 25, svg`<path d="M0 1h20" stroke="#222" stroke-width="1.300"/><path d="M.5 5.500h23v7H.5zM.5 16.500h23v7H.5z" fill="#117865" stroke="#111" stroke-dasharray="2 1"/>`)}</div>
        <div class="b">${icon(25, 25, svg`<path d="M16 14l-6 9.500H.5V.500h11l6 6v5M11.500.500v6h6" stroke="#333" stroke-width="1.100"/><path d="M24 8.500L14.500 18l2 2L24.500 9.500zM14.500 18q-4 0-4 4-1 2-4 2 7 1.500 10-4z" fill="#fff" stroke="#333"/>`)}</div></div>
      <svg class="notch" width="180" height="9" viewBox="0 0 180 9" fill="none"><path d="M0 8.500h16l8-8 8 8h148" stroke="#8a8886"/></svg>
      <div class="vgrid">${vizIcons.map((b) => icon(18, 18, b))}</div>
      <div class="dash"></div>
      <div class="bc">${icon(18, 17, svg`<text x="1" y="12" font-size="9" fill="#fff" font-family="Open Sans" textLength="10" lengthAdjust="spacingAndGlyphs">BC</text><path d="M12 11q0-4 2.500-4t2.500 4z" fill="#2fff00"/><path d="M17.500 5v7M.5 5v7" stroke="#fff"/>`)}</div>
      <div class="sec">
        <div class="h">${t("Values", 34)}</div>
        <div class="well">${t("Add data fields here", 107)}</div>
        <div class="h drill">${t("Drill through", 70)}</div>
        <div class="row r1">${t("Cross-report", 67)}<div class="tg"><i></i>${t("Off", 13)}</div></div>
        <div class="row r2">${t("Keep all filters", 74)}<div class="tg on">${t("On", 12)}<i></i></div></div>
        <div class="well w2">${t("Add drill-through fields here", 151)}</div>
      </div></div>`;
  }

  private data() {
    const table = (calc: boolean) => icon(12, 12, svg`<rect x=".5" y=".5" width="11" height="11" rx="1.500" stroke=${K}/><path d="M.5 4h11M.5 8h11M4 .5v11M8 .5v11" stroke=${K}/>
      ${calc ? svg`<rect x="6.500" y="5.500" width="6" height="7" fill="#f3f2f1" stroke=${K}/><path d="M8 8h3M8 10.500h3" stroke=${K}/>` : ""}`, "tb");
    return html`<div class="data">
      <div class="phead">${t("Data", 34)}${dbl(false)}</div>
      <div class="ds">${glass("#605e5c", 13, 1.4)}${t("Search", 41)}</div>
      <div class="tree">${([["calandertable", 72, true], ["Electronic Sales (1)", 98, false], ["Measure Table", 76, false]] as [string, number, boolean][]).map(
        ([n, w, c]) => html`<div class="tr">${icon(9, 10, svg`<path d="M2.500.500l5 4.500-5 4.500" stroke="#605e5c"/>`)}${table(c)}${t(n, w)}</div>`)}</div>
    </div>`;
  }

  private main() {
    return html`<div class="main">
      <div class="rail">
        <div class="sel">${icon(13, 13, svg`<path d="M.5 0v12.500H13" stroke=${K}/><path d="M2.500 12V5.500h2V12M5.500 12V3.500h2V12M8.500 12V6.500h2V12M10.500 12V1.500h2V12" stroke=${K}/>`)}</div>
        <div>${icon(16, 16, svg`<rect x=".5" y=".5" width="15" height="14" stroke="#797775"/><path d="M.5 2.500h15M.5 6.500h15M.5 10.500h15M5.500 2.500v12M10.500 2.500v12" stroke="#797775"/>`)}</div>
        <div>${icon(18, 18, svg`<path d="M.5 5.500h6v6h-6zM1 7.500h5M11.500.500h6v5h-6zM11.500 2.500h6M11.500 12.500h6v5h-6zM11.500 14.500h6M7 8.500h2.500M9.500 3v12M9 3.500h2.500M9 14.500h2.500" stroke="#797775"/>`)}</div>
        <div>${icon(18, 18, svg`<path d="M2.500 7V.500h7l5 5V7M9.500.500v5h5M2.500 14v2.500h8" stroke="#797775"/><text x="-1" y="14" font-size="7.500" font-weight="600" fill="#605e5c" font-family="Open Sans">DAX</text><path d="M14 12l3 3m0-3l-3 3" stroke="#797775"/>`)}</div>
      </div>
      <div class="work">
        <div class="upper"><div class="canvas"><report-page></report-page></div>
          <div class="filters">${dbl(true)}
            ${icon(12, 13, svg`<path d="M11.500.500v11.500H9.500L5.500 8H.5V5H5.500L9.500.500z" stroke="#222" stroke-width="1.200"/>`, "fl")}
            <div class="vert">Filters</div></div></div>
        <div class="tabs">
          <div class="mon">${icon(19, 14, svg`<path d="M.5.500h18v10H.5zM9.500 11v2.500M6 13.500h7" stroke="#605e5c" stroke-width="1.200"/>`)}<b></b></div>
          ${icon(64, 35, svg`<rect x="26" y="5.500" width="12" height="19" rx="1" stroke="#605e5c" stroke-width="1.300"/><path d="M31 22h2" stroke="#605e5c" stroke-width="1.200"/><path d="M64 14v8l-4-4z" fill="#c8c6c4"/>`)}
          ${icon(22, 35, svg`<path d="M18 14v8l4.500-4z" fill="#c8c6c4"/>`)}
          <div class="pg">${t("Page 1", 35)}</div>
          <div class="add">${icon(12, 12, svg`<path d="M6 .5v11M.5 6h11" stroke="#fff" stroke-width="2.600"/>`)}</div>
        </div>
      </div>
      ${this.viz()}${this.data()}
    </div>
    <div class="status">${t("Page 1 of 1", 59)}
      <div class="zoom">${icon(124, 12, svg`<path d="M1 6.500h5" stroke="#605e5c" stroke-width="1.500"/><path d="M10 6.500h100M60.500 4v5" stroke="#605e5c"/><rect x="15" y="1" width="4" height="11" fill="#605e5c"/><path d="M115 6.500h8M119 2.500v8" stroke="#605e5c"/>`)}
        <div class="pc">${t("22%", 23)}</div>
        ${icon(17, 13, svg`<rect x=".5" y=".5" width="15" height="11" stroke="#605e5c"/><path d="M3 5V3h2.500M10.500 3H13v2M13 7.500V9.500h-2.500M5.500 9.500H3V7.500" stroke="#605e5c"/>`)}</div>
    </div>`;
  }

  private taskbar() {
    return html`<div class="task">
      <div class="start">${icon(16, 16, svg`<path d="M0 2.300l6.700-.9v6.200H0zM7.500 1.300L16 0v7.600H7.500zM0 8.400h6.700v6.200L0 13.700zM7.500 8.400H16V16l-8.500-1.200z" fill="#fff"/>`)}</div>
      <div class="tbs">${glass("#222", 17)}${t("Type here to search", 128)}</div>
      <div class="app a0">${icon(17, 16, svg`<path d="M1 .5v2.500h9V.500M1 15.500V13h9v2.500M.5 5.500h10v5H.5zM14.500 0v3M14.500 8v8" stroke="#fff" stroke-width="1.200"/><path d="M13 4.500h3v3h-3z" fill="#fff"/>`)}</div>
      <div class="app a0 m3">${icon(24, 24, svg`<defs><linearGradient id="e1" x1="0" x2="1"><stop offset="0" stop-color="#2aa8e0"/><stop offset=".6" stop-color="#37c6c9"/><stop offset="1" stop-color="#6be05a"/></linearGradient></defs>
        <circle cx="12" cy="12" r="12" fill="#1276cc"/><path d="M.5 9Q3 0 12 0q11 1 12 10 0 5-6 5.500-4-.5-3-3 1-5-5-5-6 0-9.500 4z" fill="url(#e1)"/><path d="M9 11q-2 6 3 9 5 2 9-1-4 6-11 4.500Q1 20 4 12q3-5 8-4-3 1-3 3z" fill="#1560b0"/><path d="M15 12.500q-1 2.500 3 3 3 0 5-1.500l-2 4q-4 2-8 0-4-3-2-7 3-2 4 1.500z" fill="#0f1a22"/>`)}</div>
      <div class="app a1 run m5">${icon(22, 20, svg`<path d="M0 1h8l2 2h12v16H0z" fill="#e3a21a"/><path d="M0 4h22v15H0z" fill="#ffd36b"/><path d="M4 19v-8h14v8h-4v-4H8v4z" fill="#3a96dd"/>`)}</div>
      <div class="app mk m5">${icon(23, 23, svg`<path d="M6 5V1h11v4" stroke="#29a9e1" stroke-width="1.800"/><rect y="5" width="23" height="18" rx="2" fill="#f4f4f4"/><path d="M7 9h4v4H7z" fill="#f25022"/><path d="M12 9h4v4h-4z" fill="#7fba00"/><path d="M7 14h4v4H7z" fill="#00a4ef"/><path d="M12 14h4v4h-4z" fill="#ffb900"/>`)}</div>
      <div class="app a0">${icon(24, 20, svg`<path d="M0 6l12-6 12 6v13.500H0z" fill="#fff"/><path d="M2 7h20l-9 5 2 4-6-4z" fill="#151515"/>`)}</div>
      <div class="app a1 run m5">${icon(22, 22, svg`<path d="M2 3v12q5 3 11 0V3z" fill="#ffd33a"/><ellipse cx="7.500" cy="2.500" rx="5.500" ry="2.500" fill="#d98a35"/><path d="M16 1h5v5M1 16v5h5" stroke="#3c9447" stroke-width="2"/><path d="M10 12l9 9M20 11l-9 10M12 10l-3 3M17 11l3 3" stroke="#9155c9" stroke-width="2"/>`)}</div>
      <div class="app a2 run m5">${icon(19, 24, svg`<path d="M11 0h8v24h-8z" fill="#dd9a10"/><path d="M5.500 6h8v18h-8z" fill="#f0be2c"/><path d="M0 12h8v12H0z" fill="#fbe17a"/>`)}</div>
      <div class="app a1 run m5">${icon(22, 22, svg`<defs><linearGradient id="p1" x1="0" y1="1" x2="1" y2="0"><stop offset="0" stop-color="#1b6fd6"/><stop offset=".6" stop-color="#2a62b8"/><stop offset="1" stop-color="#a04a78"/></linearGradient></defs><rect width="22" height="22" rx="2" fill="url(#p1)"/><path d="M1 21L12 9l9 9v2q0 2-2 2H3z" fill="#54d0f5"/><path d="M8 22l7-9 6 6v1q0 2-2 2z" fill="#1a86dd"/><circle cx="16" cy="4" r="2" fill="#fff"/>`)}</div>
      <div class="tray">
        ${icon(24, 17, svg`<path d="M1 1h18.500v15H2.500Q1 16 1 14zM19.500 4H23v10q0 2-2 2h-2" stroke="#fff" stroke-width="1.500"/><path d="M3.500 4.500h13M11 8h6M11 10.500h6M11 13h6" stroke="#fff" stroke-width="1.200"/><rect x="4" y="8" width="5" height="5" stroke="#fff"/>`)}
        <span class="m9">${t("32°C", 29)}</span><span class="m9">${t("Mostly sunny", 82)}</span>
        ${icon(125, 20, svg`<g transform="translate(-1105 -738)" stroke="#fff" stroke-width="1.200"><path d="M1129 750l6-5.500 6 5.500M1155 742q4-3 8 0M1155 755q4 3 8 0"/><rect x="1153.500" y="744.500" width="7" height="7.500" rx="1"/><path d="M1161 747l4-1.500v6l-4-1.500M1176.500 744.500h12v7.500h-12zM1190 747v3"/><path d="M1178 746h4v4.500h-4z" fill="#fff" stroke="none"/>
          <circle cx="1207" cy="748" r="7.500"/><path d="M1200 745h14M1200 751h9M1207 740.500q-7 7 0 15M1207 740.500q4 4 3 7"/><circle cx="1211.500" cy="752.500" r="3.400" fill="#151312"/><path d="M1209 750l5 5"/>
          <path d="M1223.500 746h2l4-3.500v11l-4-3.500h-2z"/></g>`)}
        ${icon(7, 20, svg`<path d="M.5 7.500l5 5m0-5l-5 5" stroke="#fff" stroke-width="1.200"/>`)}
        <div class="clock">${t("12:26", 27)}${t("02/12/2024", 58)}</div>
        ${icon(23, 24, svg`<path d="M0 1h17v12H6l-3 4v-4H0z" fill="#fff"/><path d="M3 4.500h11M3 7h11M3 9.500h7" stroke="#222"/><circle cx="16" cy="16" r="7.500" fill="#3a3a3a" stroke="#aaa"/><text x="16" y="20" font-size="11" text-anchor="middle" fill="#fff" font-family="Open Sans">1</text>`)}
        <div class="peek"></div>
      </div>
    </div>`;
  }

  render() { return html`${this.titleBar()}${this.ribbon()}${this.main()}${this.taskbar()}`; }
}
